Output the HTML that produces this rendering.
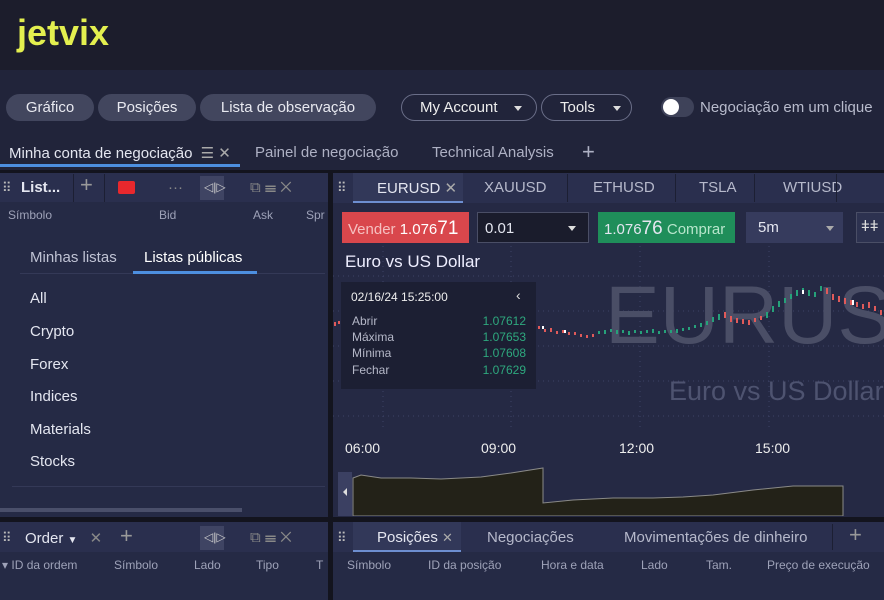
<!DOCTYPE html>
<html><head><meta charset="utf-8"><style>
*{box-sizing:border-box;margin:0;padding:0}
body{width:884px;height:600px;overflow:hidden;background:#13141e;font-family:"Liberation Sans",sans-serif;color:#e4e6f0;position:relative}
.abs{position:absolute}
.hdr{left:0;top:0;width:884px;height:70px;background:#1c1d2c}
.logo{left:17px;top:12px;font-size:36px;font-weight:bold;color:#e3ef4f;letter-spacing:0px}
.bar{left:0;top:70px;width:884px;height:100px;background:#21243a}
.pill{position:absolute;top:94px;height:27px;border-radius:14px;background:#42465e;font-size:15px;color:#e8e9f0;text-align:center;line-height:27px}
.opill{position:absolute;top:94px;height:27px;border-radius:14px;border:1px solid #6a6e88;font-size:15px;color:#eee;line-height:25px;padding-left:18px}
.tri{display:inline-block;width:0;height:0;border-left:4px solid transparent;border-right:4px solid transparent;border-top:5px solid #ddd;vertical-align:middle}
.t{position:absolute;font-size:15px;white-space:nowrap}
.panel{background:#252a45}
.hrow{background:#2a2f4e}
.sm{font-size:12px;color:#9ea2b8}
</style></head><body>
<div class="abs hdr"></div>
<div class="abs logo">jetvix</div>
<div class="abs bar"></div>
<div class="pill" style="left:6px;width:88px">Gráfico</div>
<div class="pill" style="left:98px;width:98px">Posições</div>
<div class="pill" style="left:200px;width:176px">Lista de observação</div>
<div class="opill" style="left:401px;width:136px">My Account <span class="tri" style="margin-left:12px"></span></div>
<div class="opill" style="left:541px;width:91px">Tools <span class="tri" style="margin-left:14px"></span></div>
<div class="abs" style="left:661px;top:97px;width:33px;height:20px;border-radius:10px;background:#3e4259"></div>
<div class="abs" style="left:663px;top:99px;width:16px;height:16px;border-radius:8px;background:#fff"></div>
<div class="t" style="left:700px;top:99px;color:#b8bbcc">Negociação em um clique</div>
<div class="t" style="left:9px;top:144px">Minha conta de negociação <span style="color:#aaa;margin-left:4px">☰ ✕</span></div>
<div class="abs" style="left:0;top:164px;width:240px;height:3px;background:#4d8fe0"></div>
<div class="t" style="left:255px;top:144px;color:#aeb1c4">Painel de negociação</div>
<div class="t" style="left:432px;top:144px;color:#aeb1c4">Technical Analysis</div>
<div class="t" style="left:582px;top:139px;color:#aeb1c4;font-size:22px">+</div>

<!-- left panel -->
<div class="abs panel" style="left:0;top:173px;width:328px;height:344px"></div>
<div class="abs hrow" style="left:0;top:173px;width:328px;height:29px"></div>
<div class="t" style="left:2px;top:180px;color:#bbb;font-size:13px">⠿</div>
<div class="t" style="left:21px;top:179px;font-weight:bold">List...</div>
<div class="abs" style="left:73px;top:174px;width:1px;height:28px;background:#1c1f33"></div>
<div class="t" style="left:80px;top:172px;font-size:22px;color:#999">+</div>
<div class="abs" style="left:104px;top:174px;width:1px;height:28px;background:#1c1f33"></div>
<div class="abs" style="left:118px;top:181px;width:17px;height:13px;background:#e8282d;border-radius:2px"></div>
<div class="t" style="left:168px;top:179px;color:#888">···</div>
<div class="abs" style="left:200px;top:176px;width:24px;height:24px;background:#3f4463"></div>
<div class="t" style="left:204px;top:180px;font-size:12px;color:#ccc">◁|▷</div>
<div class="t" style="left:250px;top:179px;color:#888">⧉ ☰ ✕</div>
<div class="t sm" style="left:8px;top:208px">Símbolo</div>
<div class="t sm" style="left:159px;top:208px">Bid</div>
<div class="t sm" style="left:253px;top:208px">Ask</div>
<div class="t sm" style="left:306px;top:208px">Spr</div>
<div class="t" style="left:30px;top:249px;color:#c0c3d4">Minhas listas</div>
<div class="t" style="left:144px;top:249px;color:#fff">Listas públicas</div>
<div class="abs" style="left:20px;top:273px;width:305px;height:1px;background:#343957"></div>
<div class="abs" style="left:133px;top:271px;width:124px;height:3px;background:#4d8fe0"></div>
<div class="t" style="left:30px;top:290px">All</div>
<div class="t" style="left:30px;top:323px">Crypto</div>
<div class="t" style="left:30px;top:356px">Forex</div>
<div class="t" style="left:30px;top:388px">Indices</div>
<div class="t" style="left:30px;top:421px">Materials</div>
<div class="t" style="left:30px;top:453px">Stocks</div>
<div class="abs" style="left:12px;top:486px;width:313px;height:1px;background:#343957"></div>
<div class="abs" style="left:0;top:508px;width:242px;height:4px;background:#4a4f6a"></div>

<!-- right chart panel -->
<div class="abs panel" style="left:333px;top:173px;width:551px;height:344px;background:#252944"></div>
<div class="abs hrow" style="left:333px;top:173px;width:551px;height:30px"></div>
<div class="t" style="left:337px;top:180px;color:#bbb;font-size:13px">⠿</div>
<div class="abs" style="left:353px;top:173px;width:110px;height:30px;background:#323859"></div>
<div class="abs" style="left:353px;top:201px;width:110px;height:2px;background:#6d8ed0"></div>
<div class="t" style="left:377px;top:179px">EURUSD <span style="color:#aaa">✕</span></div>
<div class="t" style="left:484px;top:179px;color:#b6b9cb">XAUUSD</div>
<div class="abs" style="left:567px;top:174px;width:1px;height:28px;background:#1c1f33"></div>
<div class="t" style="left:593px;top:179px;color:#b6b9cb">ETHUSD</div>
<div class="abs" style="left:675px;top:174px;width:1px;height:28px;background:#1c1f33"></div>
<div class="t" style="left:699px;top:179px;color:#b6b9cb">TSLA</div>
<div class="abs" style="left:754px;top:174px;width:1px;height:28px;background:#1c1f33"></div>
<div class="t" style="left:783px;top:179px;color:#b6b9cb">WTIUSD</div>
<div class="abs" style="left:836px;top:174px;width:1px;height:28px;background:#1c1f33"></div>

<div class="abs" style="left:342px;top:212px;width:127px;height:31px;background:#d9474c"></div>
<div class="t" style="left:348px;top:218px;color:#f5c0c0">Vender <span style="color:#fff">1.076<span style="font-size:19px">71</span></span></div>
<div class="abs" style="left:477px;top:212px;width:112px;height:31px;background:#1a1c2c;border:1px solid #4a4e66"></div>
<div class="t" style="left:485px;top:220px">0.01</div><span class="tri abs" style="left:568px;top:226px"></span>
<div class="abs" style="left:598px;top:212px;width:137px;height:31px;background:#1f8e5a"></div>
<div class="t" style="left:604px;top:218px">1.076<span style="font-size:19px">76</span> <span style="color:#b8e6cc">Comprar</span></div>
<div class="abs" style="left:746px;top:212px;width:97px;height:31px;background:#363b5d"></div>
<div class="t" style="left:758px;top:219px">5m</div><span class="tri abs" style="left:826px;top:226px;border-top-color:#aaa"></span>
<div class="abs" style="left:856px;top:212px;width:30px;height:31px;background:#2d3250;border:1px solid #4a4e66"></div>
<div class="t" style="left:861px;top:218px;color:#ddd">ǂǂ</div>

<svg class="abs" style="left:333px;top:246px" width="551" height="270">
<g stroke="#3d4266" stroke-dasharray="1 4">
<line x1="0" y1="30" x2="551" y2="30"/><line x1="0" y1="65" x2="551" y2="65"/><line x1="0" y1="100" x2="551" y2="100"/><line x1="0" y1="135" x2="551" y2="135"/><line x1="0" y1="170" x2="551" y2="170"/>
<line x1="50" y1="0" x2="50" y2="185"/><line x1="178" y1="0" x2="178" y2="185"/><line x1="307" y1="0" x2="307" y2="185"/><line x1="436" y1="0" x2="436" y2="185"/>
</g>
<text x="272" y="97" font-family="Liberation Sans" font-size="82" fill="#4a4e66">EURUS</text>
<text x="336" y="154" font-family="Liberation Sans" font-size="27" fill="#4e5370">Euro vs US Dollar</text>
<g stroke-width="2">
<path d="M2 76v4M6 75v3M206 80v3M212 83v3M218 82v4M224 85v3M230 84v3M236 86v3M242 86v3M248 88v3M254 89v3M260 88v3" stroke="#e05a5a"/>
<path d="M266 85v3M272 84v4M278 83v3M284 84v4M290 84v3M296 85v4M302 84v3M308 85v3M314 84v3M320 83v4M326 85v3" stroke="#26a17a"/>
<path d="M332 84v3M338 84v3M344 83v4M350 82v3M356 81v3M362 79v3M368 77v4M374 75v4M380 71v5M386 68v6" stroke="#26a17a"/>
<path d="M392 66v6M398 70v6M404 72v5M410 73v5M416 74v5M422 72v4M428 70v4" stroke="#e05a5a"/>
<path d="M434 66v6M440 60v6M446 55v6M452 52v5M458 48v5M464 44v6M470 42v4M476 44v6M482 46v5M488 40v5" stroke="#26a17a"/>
<path d="M494 42v6M500 48v6M506 50v6M512 52v6M518 54v5M524 56v5M530 58v5M536 56v6M542 60v5M548 64v5" stroke="#e05a5a"/>
<path d="M210 80v3M232 84v3M470 44v4M520 54v5" stroke="#fff"/>
</g>
<text x="12" y="21" font-family="Liberation Sans" font-size="17" fill="#eef">Euro vs US Dollar</text>
<rect x="8" y="36" width="195" height="107" fill="#1c1f33"/>
<text x="18" y="55" font-family="Liberation Sans" font-size="12" fill="#eee">02/16/24 15:25:00</text>
<text x="183" y="54" font-family="Liberation Sans" font-size="14" fill="#ddd">‹</text>
<g font-family="Liberation Sans" font-size="12" fill="#b5b8c8">
<text x="19" y="79">Abrir</text><text x="19" y="95">Máxima</text><text x="19" y="111">Mínima</text><text x="19" y="128">Fechar</text></g>
<g font-family="Liberation Sans" font-size="12" fill="#2ea87e" text-anchor="end">
<text x="193" y="79">1.07612</text><text x="193" y="95">1.07653</text><text x="193" y="111">1.07608</text><text x="193" y="128">1.07629</text></g>
<g font-family="Liberation Sans" font-size="14" fill="#eee">
<text x="12" y="207">06:00</text><text x="148" y="207">09:00</text><text x="286" y="207">12:00</text><text x="422" y="207">15:00</text></g>
<rect x="5" y="226" width="14" height="44" fill="#3b4062"/>
<path d="M14 242l-4 4 4 4z" fill="#ddd"/>
<path d="M20 270V232l8-3 20 3 30 0 30 1 40-2 30-4 32-5v35l30-3 40-2 40 0 30-1 30-2 40-5 40-4 50 0V270z" fill="#232218" stroke="#8a8a88" stroke-width="1"/>
</svg>

<!-- bottom panels -->
<div class="abs panel" style="left:0;top:522px;width:328px;height:78px"></div>
<div class="abs hrow" style="left:0;top:522px;width:328px;height:30px"></div>
<div class="t" style="left:2px;top:530px;color:#bbb;font-size:13px">⠿</div>
<div class="t" style="left:25px;top:529px">Order <span style="font-size:10px">▼</span> <span style="color:#888;margin-left:8px">✕</span></div>
<div class="t" style="left:120px;top:523px;font-size:22px;color:#999">+</div>
<div class="abs" style="left:200px;top:526px;width:24px;height:24px;background:#3f4463"></div>
<div class="t" style="left:204px;top:530px;font-size:12px;color:#ccc">◁|▷</div>
<div class="t" style="left:250px;top:529px;color:#888">⧉ ☰ ✕</div>
<div class="t sm" style="left:2px;top:558px">▾ ID da ordem</div>
<div class="t sm" style="left:114px;top:558px">Símbolo</div>
<div class="t sm" style="left:194px;top:558px">Lado</div>
<div class="t sm" style="left:256px;top:558px">Tipo</div>
<div class="t sm" style="left:316px;top:558px">T</div>

<div class="abs panel" style="left:333px;top:522px;width:551px;height:78px"></div>
<div class="abs hrow" style="left:333px;top:522px;width:551px;height:30px"></div>
<div class="t" style="left:337px;top:530px;color:#bbb;font-size:13px">⠿</div>
<div class="abs" style="left:353px;top:522px;width:108px;height:30px;background:#323859"></div>
<div class="abs" style="left:353px;top:550px;width:108px;height:2px;background:#6d8ed0"></div>
<div class="t" style="left:377px;top:529px">Posições <span style="color:#aaa;font-size:13px">✕</span></div>
<div class="t" style="left:487px;top:529px;color:#b6b9cb">Negociações</div>
<div class="t" style="left:624px;top:529px;color:#b6b9cb">Movimentações de dinheiro</div>
<div class="abs" style="left:832px;top:524px;width:1px;height:26px;background:#1c1f33"></div>
<div class="t" style="left:849px;top:522px;font-size:22px;color:#999">+</div>
<div class="t sm" style="left:347px;top:558px">Símbolo</div>
<div class="t sm" style="left:428px;top:558px">ID da posição</div>
<div class="t sm" style="left:541px;top:558px">Hora e data</div>
<div class="t sm" style="left:641px;top:558px">Lado</div>
<div class="t sm" style="left:706px;top:558px">Tam.</div>
<div class="t sm" style="left:767px;top:558px">Preço de execução</div>
</body></html>
